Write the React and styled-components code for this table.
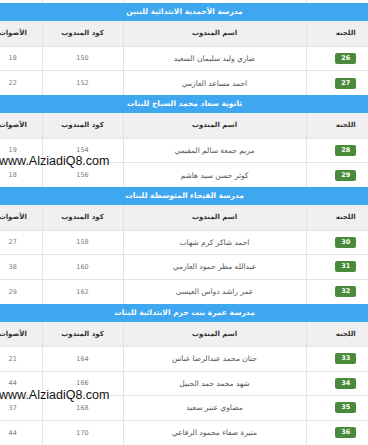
import React from "react";
import styled, { createGlobalStyle } from "styled-components";

const Global = createGlobalStyle`
  html, body { margin: 0; padding: 0; background: #fff; overflow: hidden; }
  body { width: 368px; height: 445px; position: relative; }
`;

const Page = styled.div`
  width: 368px;
  height: 445px;
  overflow: hidden;
  position: relative;
  font-family: "DejaVu Sans", "Noto Sans", sans-serif;
`;

const Sheet = styled.div`
  width: 401px;
  margin-left: -16px;
  direction: rtl;
`;

const Table = styled.table`
  width: 401px;
  border-collapse: collapse;
  table-layout: fixed;
`;

const Caption = styled.caption`
  caption-side: top;
  height: 18px;
  line-height: 18px;
  background: #3ea7ef;
  color: #fff;
  font-size: 7.5px;
  font-weight: bold;
  text-align: center;
`;

const HeadRow = styled.tr`
  height: 25px;
  background: #f0f0f0;
`;

const Th = styled.th`
  padding: 0;
  font-size: 7px;
  font-weight: bold;
  color: #333;
  text-align: center;
  white-space: nowrap;
  border-left: 1px solid #e2e2e2;
  &:last-child { border-left: none; }
`;

const Row = styled.tr`
  height: 24.5px;
  border-top: 1px solid #e4e4e4;
`;

const StubRow = styled.tr`
  height: 3px;
`;

const Td = styled.td`
  padding: 0;
  text-align: center;
  vertical-align: middle;
  border-left: 1px solid #e4e4e4;
  &:last-child { border-left: none; }
  font-size: ${(p) => (p.$num ? "6.5px" : "7.5px")};
  color: ${(p) => (p.$num ? "#7a7a7a" : "#555")};
`;

const Badge = styled.span`
  display: inline-block;
  width: 21px;
  height: 11px;
  line-height: 11px;
  border-radius: 2px;
  background: #4a8a3b;
  color: #fff;
  font-size: 6.5px;
  font-weight: bold;
  text-align: center;
`;

const Watermark = styled.div`
  position: absolute;
  left: -1px;
  top: ${(p) => p.$top}px;
  font-family: "Liberation Sans", Arial, sans-serif;
  font-size: 12.5px;
  line-height: 14px;
  color: #111;
  text-shadow: 0 0 2px #fff, 0 0 2px #fff;
  pointer-events: none;
`;

const cols = [79, 183, 81, 58];

const blocks = [
  {
    title: "مدرسة الأحمدية الابتدائية للبنين",
    rows: [
      ["26", "ضاري وليد سليمان السعيد", "150", "18"],
      ["27", "احمد مساعد العازمي", "152", "22"],
    ],
  },
  {
    title: "ثانوية سعاد محمد الصباح للبنات",
    rows: [
      ["28", "مريم جمعة سالم المقيمي", "154", "19"],
      ["29", "كوثر حسن سيد هاشم", "156", "18"],
    ],
  },
  {
    title: "مدرسة الفيحاء المتوسطة للبنات",
    rows: [
      ["30", "احمد شاكر كرم شهاب", "158", "27"],
      ["31", "عبدالله مطر حمود العازمي", "160", "38"],
      ["32", "عمر راشد دواس العيسى", "162", "29"],
    ],
  },
  {
    title: "مدرسة عمرة بنت حزم الابتدائية للبنات",
    rows: [
      ["33", "جنان محمد عبدالرضا عباس", "164", "21"],
      ["34", "شهد محمد حمد الحبيل", "166", "44"],
      ["35", "مضاوي عنبر سعيد", "168", "37"],
      ["36", "منيرة صفاء محمود الرفاعي", "170", "44"],
    ],
  },
];

function Cols() {
  return (
    <colgroup>
      {cols.map((w, i) => (
        <col key={i} style={{ width: w }} />
      ))}
    </colgroup>
  );
}

export default function App() {
  return (
    <Page>
      <Global />
      <Sheet>
        <Table>
          <Cols />
          <tbody>
            <StubRow>
              <Td />
              <Td />
              <Td />
              <Td />
            </StubRow>
          </tbody>
        </Table>
        {blocks.map((b) => (
          <Table key={b.title}>
            <Caption>{b.title}</Caption>
            <Cols />
            <thead>
              <HeadRow>
                <Th>اللجنه</Th>
                <Th>اسم المندوب</Th>
                <Th>كود المندوب</Th>
                <Th>الأصوات</Th>
              </HeadRow>
            </thead>
            <tbody>
              {b.rows.map((r) => (
                <Row key={r[0]}>
                  <Td>
                    <Badge>{r[0]}</Badge>
                  </Td>
                  <Td>{r[1]}</Td>
                  <Td $num>{r[2]}</Td>
                  <Td $num>{r[3]}</Td>
                </Row>
              ))}
            </tbody>
          </Table>
        ))}
      </Sheet>
      <Watermark $top={154}>www.AlziadiQ8.com</Watermark>
      <Watermark $top={388}>www.AlziadiQ8.com</Watermark>
    </Page>
  );
}
